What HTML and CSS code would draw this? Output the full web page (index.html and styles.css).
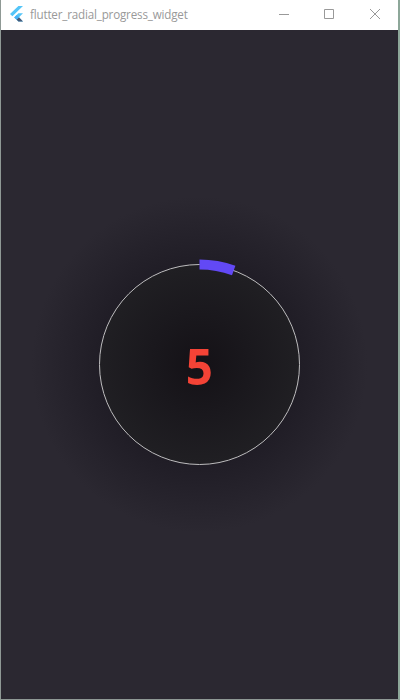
FILE: index.html
```
<!DOCTYPE html>
<html lang="en">
<head>
<meta charset="utf-8">
<title>flutter_radial_progress_widget</title>
<link rel="stylesheet" href="styles.css">
</head>
<body>
<div class="window">
  <header class="titlebar">
    <svg class="logo" width="14" height="16" viewBox="0 0 14 16">
      <path fill="#54c5f8" d="M8.4 0H13L2.4 10.2 0 7.9zM8.4 7.2H13L9 11.2 13 15.5H8.4L4.2 11.4z"/>
      <path fill="#465a78" d="M6.500 13.500 9 11.200 13 15.500H8.400z"/>
      <path fill="#46b2f8" d="M4.2 11.4 6.6 9 9 11.2 6.5 13.5z"/>
    </svg>
    <span class="title">flutter_radial_progress_widget</span>
    <svg class="controls" width="102" height="12" viewBox="0 0 102 12" fill="none" stroke="#999">
      <path d="M0 6.500H10M45.500 1.500H54.500V10.500H45.500zM91 1 101 11M101 1 91 11"/>
    </svg>
  </header>
  <main class="content">
    <div class="dial">
      <svg class="ring" width="219" height="219" viewBox="-109.5 -109.5 219 219" fill="none">
        <circle r="100" stroke="#bdbcbe"/>
        <path d="M0 -100A100 100 0 0 1 34.200 -93.970" stroke="#6249f5" stroke-width="10"/>
      </svg>
      <span class="value">5</span>
    </div>
  </main>
</div>
</body>
</html>
```
FILE: styles.css
```
body {
  margin: 0;
  font-family: "Open Sans", "Noto Sans", sans-serif;
}

.window {
  box-sizing: border-box;
  width: 400px;
  height: 700px;
  display: flex;
  flex-direction: column;
  border: solid #8f9995;
  border-width: 0 2px 1px 1px;
  border-right-color: #8da799;
  background: #2b2831;
}

.titlebar {
  box-sizing: border-box;
  height: 30px;
  display: flex;
  align-items: center;
  padding: 0 17px 2px 9px;
  background: #fff;
}

.logo {
  flex: none;
  margin-right: 6px;
}

.title {
  flex: 1;
  padding-top: 1px;
  color: #999;
  font-size: 12.5px;
  line-height: 16px;
  letter-spacing: -0.2px;
  white-space: nowrap;
  transform: scaleX(0.931);
  transform-origin: left;
}

.controls {
  flex: none;
}

.content {
  flex: 1;
  display: flex;
  align-items: center;
  justify-content: center;
  background: radial-gradient(circle at 198.5px 334.5px, #201d26 0, #201d26 100px, #2b2831 168px);
}

.dial {
  display: grid;
  place-items: center;
  width: 219px;
  height: 219px;
  background: radial-gradient(circle, #141116 0, #1a181d 50px, #201f23 100px, transparent 100.5px);
}

.ring,
.value {
  grid-area: 1 / 1;
}

.value {
  padding-top: 3px;
  color: #f44336;
  font-size: 50px;
  font-weight: 700;
  line-height: 60px;
  transform: scaleX(0.95);
}
```
